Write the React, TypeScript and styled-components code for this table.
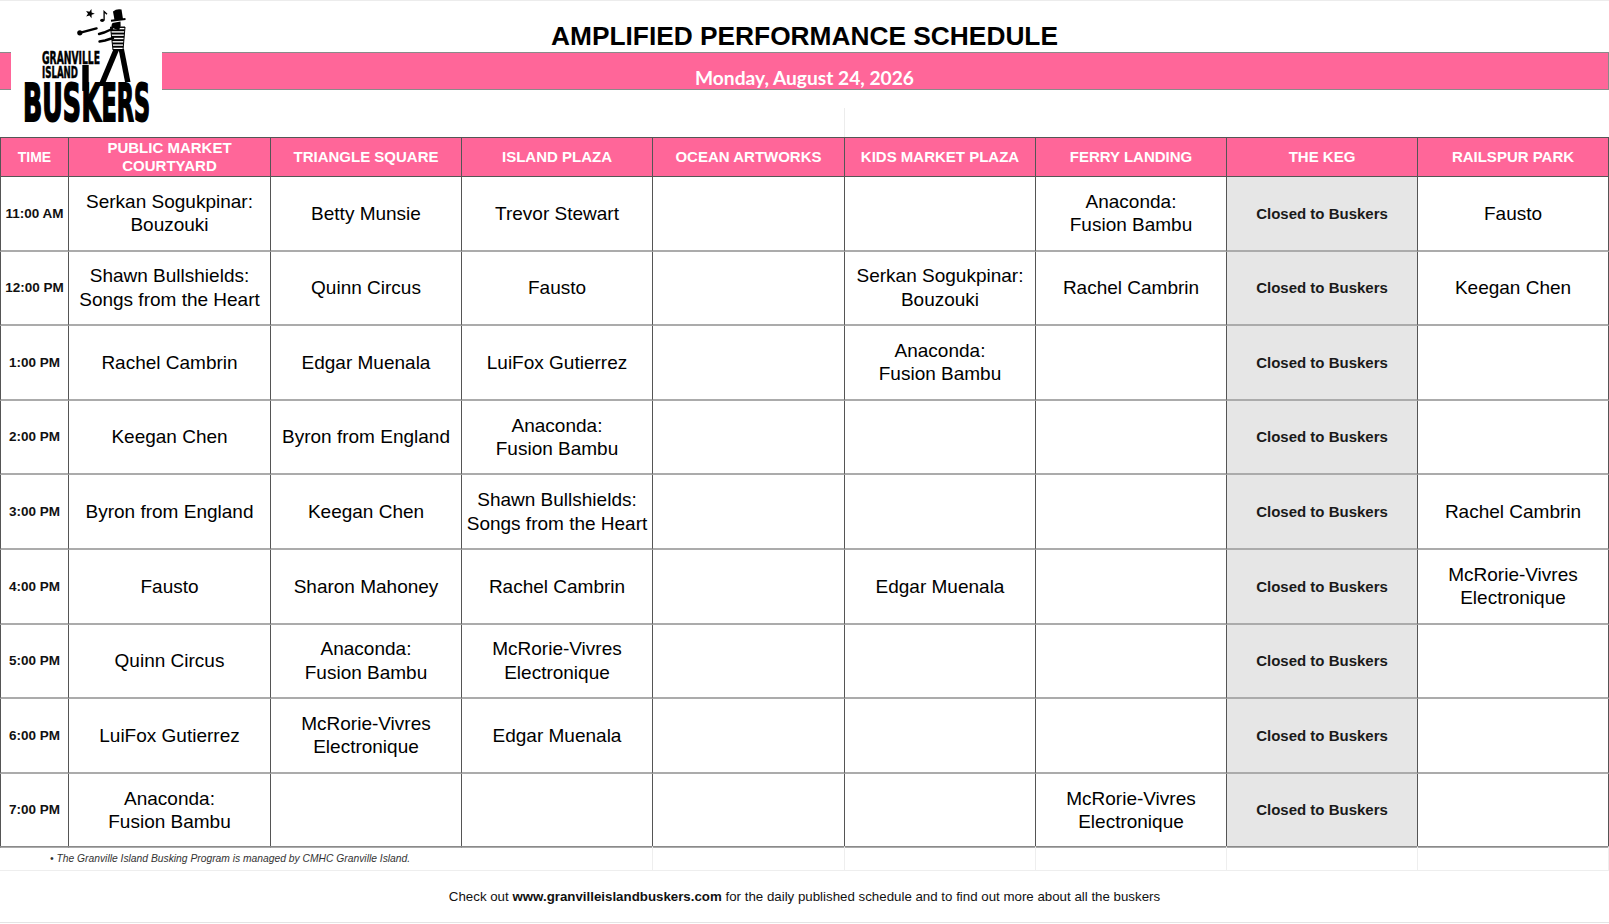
import React from "react";
import styled, {createGlobalStyle} from "styled-components";

const PINK = "#ff6699";
const LINE = "#555";
const KEG_COLUMN = 6;

const VENUES = [
  "Public Market Courtyard",
  "Triangle Square",
  "Island Plaza",
  "Ocean Artworks",
  "Kids Market Plaza",
  "Ferry Landing",
  "The Keg",
  "Railspur Park",
];

const FUSION = "Anaconda:\nFusion Bambu";
const SERKAN = "Serkan Sogukpinar:\nBouzouki";
const SHAWN = "Shawn Bullshields:\nSongs from the Heart";
const MCRORIE = "McRorie-Vivres\nElectronique";

const SCHEDULE: {time: string; acts: string[]}[] = [
  {time: "11:00 AM", acts: [SERKAN, "Betty Munsie", "Trevor Stewart", "", "", FUSION, "", "Fausto"]},
  {time: "12:00 PM", acts: [SHAWN, "Quinn Circus", "Fausto", "", SERKAN, "Rachel Cambrin", "", "Keegan Chen"]},
  {time: "1:00 PM", acts: ["Rachel Cambrin", "Edgar Muenala", "LuiFox Gutierrez", "", FUSION, "", "", ""]},
  {time: "2:00 PM", acts: ["Keegan Chen", "Byron from England", FUSION, "", "", "", "", ""]},
  {time: "3:00 PM", acts: ["Byron from England", "Keegan Chen", SHAWN, "", "", "", "", "Rachel Cambrin"]},
  {time: "4:00 PM", acts: ["Fausto", "Sharon Mahoney", "Rachel Cambrin", "", "Edgar Muenala", "", "", MCRORIE]},
  {time: "5:00 PM", acts: ["Quinn Circus", FUSION, MCRORIE, "", "", "", "", ""]},
  {time: "6:00 PM", acts: ["LuiFox Gutierrez", MCRORIE, "Edgar Muenala", "", "", "", "", ""]},
  {time: "7:00 PM", acts: [FUSION, "", "", "", "", MCRORIE, "", ""]},
];

// pieces of the big wordmark: [text, left x, width]
const WORDMARK: [string, number, number][] = [
  ["BUS", 23, 58],
  ["K", 81.5, 19.5],
  ["ERS", 101.5, 48.5],
];

const starPath = (cx: number, cy: number, r: number, ri: number) => {
  const pts: string[] = [];
  for (let i = 0; i < 10; i++) {
    const rad = i % 2 === 0 ? r : ri;
    const a = -Math.PI / 2 + (i * Math.PI) / 5 + 0.3;
    pts.push(`${(cx + rad * Math.cos(a)).toFixed(2)},${(cy + rad * Math.sin(a)).toFixed(2)}`);
  }
  return `M${pts.join(" L")} Z`;
};

export default function App() {
  return (
    <>
      <GlobalStyle />
      <Page>
        <Header>
          <Title>AMPLIFIED PERFORMANCE SCHEDULE</Title>
          <BarStub />
          <DateBar />
          <DateText>Monday, August 24, 2026</DateText>
          <Logo />
          <GuideLine />
        </Header>

        <Table>
          <HeadCell $small>Time</HeadCell>
          {VENUES.map((v) => (
            <HeadCell key={v}>{v}</HeadCell>
          ))}

          {SCHEDULE.map((slot) => (
            <React.Fragment key={slot.time}>
              <TimeCell>{slot.time}</TimeCell>
              {slot.acts.map((act, i) =>
                i === KEG_COLUMN ? (
                  <Cell key={i} $closed>
                    Closed to Buskers
                  </Cell>
                ) : (
                  <Cell key={i}>{act}</Cell>
                )
              )}
            </React.Fragment>
          ))}

          <NoteCell>• The Granville Island Busking Program is managed by CMHC Granville Island.</NoteCell>
          {Array.from({length: 6}).map((_, i) => (
            <NoteGap key={i} />
          ))}
        </Table>

        <Footer>
          Check out&nbsp;<b>www.granvilleislandbuskers.com</b>&nbsp;for the daily published schedule and to
          find out more about all the buskers
        </Footer>
      </Page>
    </>
  );
}

const Logo: React.FC = () => {
  const stripes = [];
  for (let y = 25; y < 50; y += 3.3) {
    stripes.push(<rect key={y} x="108" y={y} width="20" height="1.9" fill="#000" />);
  }
  return (
    <LogoBox>
      <svg width="151" height="137" viewBox="11 0 151 137">
        <defs>
          <clipPath id="busker-torso">
            <path d="M110.5 26 L125 26 L123 49 L113 49 Z" />
          </clipPath>
        </defs>
        <path d={starPath(90, 12.7, 4.8, 2)} fill="#000" />
        <ellipse cx="102.2" cy="19.3" rx="2.1" ry="1.6" fill="#000" />
        <path d="M104.1 19.2 V10.5 Q105.8 12 107 13.2" stroke="#000" strokeWidth="1.3" fill="none" />
        <line x1="81.5" y1="31.4" x2="96.5" y2="27.4" stroke="#000" strokeWidth="2.4" strokeLinecap="round" />
        <circle cx="79.8" cy="31.8" r="2.6" fill="#000" />
        <path d="M113 10.5 Q116.5 7.5 121.5 8.5 L123 18 L114.5 19 Z" fill="#000" />
        <path d="M111 19.8 L125.5 18" stroke="#000" strokeWidth="1.9" />
        <path d="M112.5 22 Q110.5 25 112.5 27 L119 29.5 Q121.5 25 120.5 20.5 Z" fill="#000" />
        <path d="M112 28 L104 31.5 L99 33" stroke="#000" strokeWidth="2.4" fill="none" strokeLinecap="round" />
        <path d="M113 37 L105 39.5 L99.5 40.5" stroke="#000" strokeWidth="2.4" fill="none" strokeLinecap="round" />
        <g clipPath="url(#busker-torso)">{stripes}</g>
        <path d="M110.5 26 L125 26 L123 49 L113 49 Z" stroke="#000" strokeWidth="1" fill="none" />
        <path d="M113.5 48 L119.5 48 L104 85 L98 85 Z" fill="#000" />
        <path d="M118.5 48 L124 48 L130.5 81 L125 81 Z" fill="#000" />
        <rect x="82.3" y="64" width="6.4" height="26" fill="#000" />
        <LogoText strokeWidth="0.5">
          <tspan x="42" y="63" fontSize="18" textLength="58" lengthAdjust="spacingAndGlyphs">
            GRANVILLE
          </tspan>
          <tspan x="42" y="77" fontSize="16.5" textLength="36" lengthAdjust="spacingAndGlyphs">
            ISLAND
          </tspan>
        </LogoText>
        {WORDMARK.map(([word, x, w]) => (
          <LogoText key={word} strokeWidth="1.8" transform={`translate(${x} 120) scale(0.5 1)`}>
            <tspan x="0" y="0" fontSize="51" textLength={w * 2} lengthAdjust="spacingAndGlyphs">
              {word}
            </tspan>
          </LogoText>
        ))}
      </svg>
    </LogoBox>
  );
};

const GlobalStyle = createGlobalStyle`
  html, body {
    margin: 0;
    padding: 0;
    background: #fff;
  }
  body {
    font-family: "Liberation Sans", Arial, sans-serif;
    color: #111;
  }
  * {
    box-sizing: border-box;
  }
`;

const Page = styled.div`
  width: 1609px;
  height: 924px;
  overflow: hidden;
  border-top: 1px solid #ececec;
  display: flex;
  flex-direction: column;
`;

const Header = styled.div`
  display: grid;
  grid-template-columns: 11px 151px 1fr;
  grid-template-rows: 51px 38px 47px;
`;

const Title = styled.h1`
  grid-column: 1 / -1;
  grid-row: 1;
  align-self: end;
  margin: 0 0 3px;
  font-size: 26.3px;
  line-height: 26px;
  font-weight: bold;
  text-align: center;
  color: #000;
`;

const BarStub = styled.div`
  grid-column: 1;
  grid-row: 2;
  background: ${PINK};
  border-top: 1px solid #8a8a8a;
  border-bottom: 1px solid #8a8a8a;
`;

const DateBar = styled(BarStub)`
  grid-column: 3;
  border-right: 1px solid #8a8a8a;
`;

const DateText = styled.div`
  grid-column: 1 / -1;
  grid-row: 2;
  z-index: 1;
  padding-top: 16px;
  text-align: center;
  font-family: Lato, "Open Sans", sans-serif;
  font-weight: bold;
  font-size: 19.2px;
  line-height: 19px;
  color: #fff;
`;

const LogoBox = styled.div`
  grid-column: 2;
  grid-row: 1 / -1;
  z-index: 2;
  background: #fff;
  svg {
    display: block;
  }
`;

const LogoText = styled.text`
  font-family: "DejaVu Sans Condensed", "DejaVu Sans", sans-serif;
  font-weight: bold;
  fill: #000;
  stroke: #000;
`;

const GuideLine = styled.div`
  grid-column: 3;
  grid-row: 3;
  margin: 18px 0 0 682px;
  border-left: 1px solid #ececec;
`;

const Table = styled.div`
  display: grid;
  grid-template-columns: 69px 202px 191px 191px 192px 191px 191px 191px 1fr;
  grid-template-rows: 39px repeat(9, 74.6px) 23px;
  border-top: 1px solid ${LINE};
`;

const HeadCell = styled.div<{$small?: boolean}>`
  display: flex;
  align-items: center;
  justify-content: center;
  padding: 0 6px;
  background: ${PINK};
  color: #fff;
  font-weight: bold;
  font-size: ${(p) => (p.$small ? "14px" : "15px")};
  line-height: 18px;
  text-align: center;
  text-transform: uppercase;
  border-right: 1px solid ${LINE};
  border-bottom: 1px solid ${LINE};
  &:first-child {
    border-left: 1px solid ${LINE};
  }
`;

const Cell = styled.div<{$closed?: boolean}>`
  display: flex;
  align-items: center;
  justify-content: center;
  padding: 0 4px;
  background: ${(p) => (p.$closed ? "#e6e6e6" : "#fff")};
  color: ${(p) => (p.$closed ? "#1a1a1a" : "#000")};
  font-size: ${(p) => (p.$closed ? "15px" : "19px")};
  font-weight: ${(p) => (p.$closed ? "bold" : "normal")};
  line-height: 23.5px;
  text-align: center;
  white-space: pre-line;
  border-right: 1px solid ${LINE};
  border-bottom: 2px solid #ababab;
`;

const TimeCell = styled(Cell)`
  font-size: 13.5px;
  font-weight: bold;
  color: #111;
  padding: 0;
  border-left: 1px solid ${LINE};
`;

const NoteCell = styled.div`
  grid-column: span 3;
  display: flex;
  align-items: center;
  padding-left: 50px;
  font-size: 10.3px;
  font-style: italic;
  color: #333;
  border-top: 1px solid #8a8a8a;
  border-bottom: 1px solid #eeeeee;
  margin-top: -2px;
`;

const NoteGap = styled.div`
  border-top: 1px solid #8a8a8a;
  border-right: 1px solid #eeeeee;
  border-bottom: 1px solid #eeeeee;
  margin-top: -2px;
`;

const Footer = styled.div`
  height: 52px;
  display: flex;
  align-items: center;
  justify-content: center;
  font-size: 13.3px;
  color: #111;
  border-bottom: 1px solid #e4e4e4;
  b {
    font-weight: bold;
  }
`;
